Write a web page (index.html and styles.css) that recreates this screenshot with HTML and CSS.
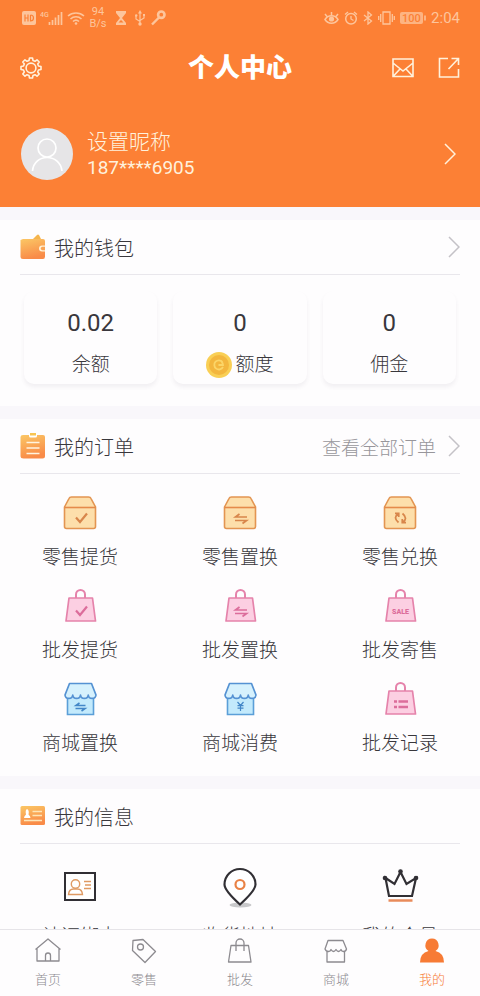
FILE: index.html
```html
<!DOCTYPE html>
<html lang="zh-CN">
<head>
<meta charset="utf-8">
<meta name="viewport" content="width=device-width, initial-scale=1">
<title>个人中心</title>
<link rel="stylesheet" href="styles.css">
</head>
<body>
<svg class="defs" aria-hidden="true">
  <defs>
    <linearGradient id="gold" x1="0" y1="0" x2="0.3" y2="1"><stop offset="0" stop-color="#fbc765"/><stop offset="1" stop-color="#f98b48"/></linearGradient>
    <symbol id="box" viewBox="0 0 36 36">
      <path d="M2.5 12 L7 3.5 Q7.600 2 9.500 2 H26.500 Q28.400 2 29 3.500 L33.500 12 V31.500 Q33.500 33.500 31.500 33.500 H4.500 Q2.500 33.500 2.500 31.500Z" fill="#fddfab" stroke="#e39552" stroke-width="1.600"/>
      <path d="M2.500 12.500H33.500" stroke="#e58a4a" stroke-width="1.600"/>
    </symbol>
    <symbol id="bag" viewBox="0 0 36 36">
      <path d="M14 10V6.500a4.500 4.500 0 0 1 9 0V10" fill="none" stroke="#e583ab" stroke-width="2"/>
      <path d="M7 10H30.500L33.500 33H4Z" fill="#fccfe2" stroke="#e583ab" stroke-width="1.700" stroke-linejoin="round"/>
    </symbol>
    <symbol id="shop" viewBox="0 0 36 36">
      <path d="M5.500 15H31.500V33.500H5.500Z" fill="#c3eafc" stroke="#5b9fd8" stroke-width="1.600"/>
      <path d="M7.500 2.500H29.500L34 14a3.900 3.900 0 0 1-7.750 0 3.900 3.900 0 0 1-7.750 0 3.900 3.900 0 0 1-7.750 0A3.900 3.900 0 0 1 3 14Z" fill="#d6f1fd" stroke="#5592d3" stroke-width="1.700" stroke-linejoin="round"/>
    </symbol>
    <symbol id="check" viewBox="0 0 36 36"><path d="M14 22.500l4 4.500 7-8.500" fill="none" stroke="currentColor" stroke-width="2.200"/></symbol>
    <symbol id="swap" viewBox="0 0 36 36"><path d="M25 22H13.500l4-3M13 25.500H24.500l-4 3" fill="none" stroke="currentColor" stroke-width="1.700"/></symbol>
    <symbol id="swap-small" viewBox="0 0 36 36"><path d="M23.500 24.500H14l3.500-2.500M13.500 27.500H23l-3.500 2.500" fill="none" stroke="currentColor" stroke-width="1.600"/></symbol>
    <symbol id="chevron" viewBox="0 0 12 24"><path d="M1 2l10 10L1 22" fill="none" stroke="currentColor" stroke-width="1.500"/></symbol>
  </defs>
</svg>

<main class="page">
  <header class="hero">
    <div class="status">
      <div class="status-group">
        <svg width="14" height="14" viewBox="0 0 14 14"><rect width="14" height="14" rx="2" fill="currentColor"/><path d="M3 3.500v7M6 3.500v7M3 7h3M8.500 4v6c4 0 4-6 0-6" fill="none" stroke="#fc8035" stroke-width="1.200"/></svg>
        <svg width="23" height="16" viewBox="0 0 23 16"><text x="0" y="7" class="tiny">4G</text><path d="M9.500 12v3M12.500 10v5M15.500 7.500V15M18.500 5v10M21.500 2v13" stroke="currentColor" stroke-width="1.700"/></svg>
        <svg width="18" height="14" viewBox="0 0 18 14"><path d="M1 5a12 12 0 0 1 16 0M3.500 8a8 8 0 0 1 11 0M6 10.500a4.500 4.500 0 0 1 6 0" fill="none" stroke="currentColor" stroke-width="1.600"/><circle cx="9" cy="12.500" r="1.300" fill="currentColor"/></svg>
        <span class="speed">94<br>B/s</span>
        <svg class="glass" width="12" height="14" viewBox="0 0 12 14"><path d="M1 0h10v2l-4 5 4 5v2H1v-2l4-5-4-5z" fill="currentColor"/><path d="M3.500 11.500L6 9l2.500 2.500" fill="#fc8035"/></svg>
        <svg width="10" height="16" viewBox="0 0 10 16"><path d="M5 2v11M1 6v3l4 2.500M9 5v3L5 10.500" fill="none" stroke="currentColor" stroke-width="1.200"/><path d="M3 3.500L5 0l2 3.500z" fill="currentColor"/><circle cx="5" cy="14" r="1.700" fill="currentColor"/><circle cx="1.200" cy="5.500" r="1.200" fill="currentColor"/><path d="M8 4h2v2H8z" fill="currentColor"/></svg>
        <svg class="key" width="15" height="16" viewBox="0 0 15 16"><circle cx="10.300" cy="4.700" r="3.200" fill="none" stroke="currentColor" stroke-width="2.600"/><path d="M8 7.500L1 14.500" stroke="currentColor" stroke-width="2.400"/></svg>
      </div>
      <div class="status-group right">
        <svg width="15" height="14" viewBox="0 0 15 14"><path d="M1 8.500c3-5 10-5 13 0-3 5-10 5-13 0zM1 3l2 2.500M7.500 1v3M14 3l-2 2.500" fill="none" stroke="currentColor" stroke-width="1.500"/><circle cx="7.500" cy="8" r="2.600" fill="currentColor"/></svg>
        <svg width="14" height="14" viewBox="0 0 14 14"><circle cx="7" cy="7.700" r="5.300" fill="none" stroke="currentColor" stroke-width="1.500"/><path d="M1 3.500L4 1M13 3.500L10 1M7 5v3l2.500 1.500" fill="none" stroke="currentColor" stroke-width="1.300"/></svg>
        <svg width="10" height="14" viewBox="0 0 10 14"><path d="M1 4l7.500 6L5 13V1l3.500 3L1 10" fill="none" stroke="currentColor" stroke-width="1.300"/></svg>
        <svg width="17" height="14" viewBox="0 0 17 14"><path d="M5 1h7v12H5zM2.700 3v8M.7 5v4M14.300 3v8M16.300 5v4" fill="none" stroke="currentColor" stroke-width="1.300"/></svg>
        <svg width="26" height="12" viewBox="0 0 26 12"><rect width="23" height="12" rx="2" fill="currentColor" opacity=".75"/><path d="M25 3.500v5" stroke="currentColor" stroke-width="1.500"/><text x="2" y="10" class="charge">100</text></svg>
        <span class="clock">2:04</span>
      </div>
    </div>
    <div class="nav">
      <button class="icon-btn" aria-label="设置">
        <svg width="22" height="22" viewBox="0 0 22 22"><path d="M9 3.500L9.500 1h3L13 3.500l2 .8L17 2.800 19.200 5l-1.500 2 .8 2 2.500.5v3l-2.500.5-.8 2 1.500 2-2.200 2.200-2-1.500-2 .8-.5 2.500h-3L9 18.500l-2-.8-2 1.500L2.800 17l1.500-2-.8-2L1 12.500v-3L3.500 9l.8-2-1.500-2L5 2.800l2 1.500z" fill="none" stroke="currentColor" stroke-width="1.600" stroke-linejoin="round"/><circle cx="11" cy="11" r="4.900" fill="none" stroke="currentColor" stroke-width="1.600"/></svg>
      </button>
      <h1>个人中心</h1>
      <div class="nav-actions">
        <button class="icon-btn" aria-label="消息"><svg width="22" height="20" viewBox="0 0 22 20"><path d="M1 1h20v17.500H1zM1 5l10 8 10-8M1 18.500l7-7.500M21 18.500L14 11" fill="none" stroke="currentColor" stroke-width="1.600"/></svg></button>
        <button class="icon-btn" aria-label="分享"><svg width="22" height="22" viewBox="0 0 22 22"><path d="M10 1.500H1.500v18.500h19V12M13.500 1.500h7V8M20.500 1.500L10.500 12" fill="none" stroke="currentColor" stroke-width="1.600"/></svg></button>
      </div>
    </div>
    <a class="profile" href="#profile">
      <svg width="52" height="52" viewBox="0 0 52 52"><circle cx="26" cy="26" r="26" fill="#e6e5e7"/><circle cx="26" cy="20" r="9" fill="none" stroke="#fff" stroke-width="1.700"/><path d="M11.500 43C13 25 39 25 41 43" fill="none" stroke="#fff" stroke-width="1.700"/></svg>
      <span class="who"><span class="nick">设置昵称</span><span class="phone">187****6905</span></span>
      <svg class="chevron" width="12" height="24"><use href="#chevron"/></svg>
    </a>
  </header>

  <section class="panel">
    <a class="panel-head" href="#wallet">
      <svg width="26" height="26" viewBox="0 0 26 26"><path d="M13 5l4-4q1-.8 2 0l2 4z" fill="#f5b54d"/><path d="M3 5h20q2 0 2 2v15.500q0 2.500-2 2.500H3q-2.500 0-2.500-2.500V6z" fill="url(#gold)"/><path d="M25 11.500h-3a3 3 0 0 0 0 6h3z" fill="#fff0d5"/><path d="M25 12.800h-2.500a1.700 1.700 0 0 0 0 3.400H25z" fill="#f9a456"/></svg>
      <h2>我的钱包</h2>
      <svg class="chevron" width="12" height="24"><use href="#chevron"/></svg>
    </a>
    <div class="cards">
      <a class="card" href="#balance"><span class="amount">0.02</span><span class="caption">余额</span></a>
      <a class="card" href="#quota"><span class="amount">0</span><span class="caption"><svg width="26" height="26" viewBox="0 0 26 26"><circle cx="13" cy="13" r="13" fill="#f9cf55"/><circle cx="13" cy="13" r="10" fill="#f3b63e"/><path d="M16.500 10a4.600 4.600 0 1 0 .5 5M12.500 13h4.500q0-2-1.500-3" fill="none" stroke="#fbd568" stroke-width="1.800"/></svg>额度</span></a>
      <a class="card" href="#commission"><span class="amount">0</span><span class="caption">佣金</span></a>
    </div>
  </section>

  <section class="panel">
    <a class="panel-head" href="#orders">
      <svg width="26" height="26" viewBox="0 0 26 26"><path d="M3 2h20q2 0 2 2v19q0 2.500-2.500 2.500h-19Q.5 25.500.5 23V4q0-2 2.500-2z" fill="url(#gold)"/><path d="M9 0h8v3q0 1.500-1.500 1.500h-5Q9 4.500 9 3z" fill="#fff"/><path d="M10 0h6v2.500h-6z" fill="#f8c451"/><path d="M6.500 9.500h13M6.500 15h13M6.500 20.500h13" stroke="#fff4df" stroke-width="1.700"/></svg>
      <h2>我的订单</h2>
      <span class="more">查看全部订单</span>
      <svg class="chevron" width="12" height="24"><use href="#chevron"/></svg>
    </a>
    <div class="grid">
      <a class="tile" href="#o1"><svg class="amber"><use href="#box"/><use href="#check"/></svg>零售提货</a>
      <a class="tile" href="#o2"><svg class="amber"><use href="#box"/><use href="#swap"/></svg>零售置换</a>
      <a class="tile" href="#o3"><svg class="amber" viewBox="0 0 36 36"><use href="#box"/><path d="M16.500 18.500q-6 4 0 9M13 18.300h3.700v3.700M20.500 27.500q6-4 0-9M24 27.700h-3.700v-3.700" fill="none" stroke="currentColor" stroke-width="1.800"/></svg>零售兑换</a>
      <a class="tile" href="#o4"><svg class="pink"><use href="#bag"/><use href="#check"/></svg>批发提货</a>
      <a class="tile" href="#o5"><svg class="pink"><use href="#bag"/><use href="#swap"/></svg>批发置换</a>
      <a class="tile" href="#o6"><svg class="pink" viewBox="0 0 36 36"><use href="#bag"/><text x="18.500" y="26" text-anchor="middle" class="sale">SALE</text></svg>批发寄售</a>
      <a class="tile" href="#o7"><svg class="blue"><use href="#shop"/><use href="#swap-small"/></svg>商城置换</a>
      <a class="tile" href="#o8"><svg class="blue" viewBox="0 0 36 36"><use href="#shop"/><path d="M15.500 21l3 3.500 3-3.500M18.500 24.500v5.500M15.500 24.700h6M15.500 27.200h6" fill="none" stroke="currentColor" stroke-width="1.200"/></svg>商城消费</a>
      <a class="tile" href="#o9"><svg class="pink" viewBox="0 0 36 36"><use href="#bag"/><path d="M12 20.500h3M16.500 20.500h9.500M12 26h3M16.500 26h9.500" stroke="currentColor" stroke-width="2.400"/></svg>批发记录</a>
    </div>
  </section>

  <section class="panel">
    <div class="panel-head">
      <svg width="26" height="26" viewBox="0 0 26 26"><rect x=".5" y="3" width="24.500" height="19" rx="1.500" fill="url(#gold)"/><path d="M4 15q0-2 2-3.500-1-4.500 1-5.500 2.500 1 1.500 5.500 2 1.500 2 3.500z" fill="#fff"/><path d="M12.500 8.500H22M12.500 12.500H22M4 17.500h18" stroke="#fde5b9" stroke-width="1.500"/></svg>
      <h2>我的信息</h2>
    </div>
    <div class="grid info">
      <a class="tile" href="#i1"><svg viewBox="0 0 36 36"><rect x="3" y="4" width="30" height="27" fill="#fff" stroke="#312f34" stroke-width="2"/><g fill="none" stroke="#df9a63" stroke-width="1.400"><circle cx="13.500" cy="15" r="4.200"/><path d="M6.500 25.500q.5-5.500 5-5.500h4q4.500 0 5 5.500zM22 12.500h7M23 16h6M22 19.500h7"/></g></svg>认证绑卡</a>
      <a class="tile" href="#i2"><svg viewBox="0 0 36 36"><ellipse cx="18.500" cy="36" rx="11" ry="2.500" fill="#c9c9cb"/><path d="M18 35.500Q2.500 21.500 2.500 15.500a15.500 15.500 0 0 1 31 0Q33.500 21.500 18 35.500z" fill="#fff" stroke="#312f34" stroke-width="2.200"/><circle cx="18" cy="15.500" r="4.500" fill="none" stroke="#e98245" stroke-width="2.200"/></svg>收货地址</a>
      <a class="tile" href="#i3"><svg viewBox="0 0 36 36"><path d="M3.500 9L7 27h23l4-18-9.500 6-6-12-6 12z" fill="none" stroke="#312f34" stroke-width="2.200"/><g fill="#312f34"><circle cx="3" cy="9" r="2.300"/><circle cx="18.500" cy="2.500" r="2.300"/><circle cx="34" cy="9" r="2.300"/></g><path d="M6.500 31.500h24" stroke="#e98b5b" stroke-width="2.500"/></svg>我的会员</a>
    </div>
  </section>
</main>

<nav class="tabs">
  <a href="#home"><svg viewBox="0 0 28 28"><path d="M1.500 12.500L14 2l12.500 10.500M3 11v13h22V11M11.500 24v-5.500a2.500 2.500 0 0 1 5 0V24"/></svg>首页</a>
  <a href="#retail"><svg viewBox="0 0 28 28"><path d="M3 3.500L13 2.500 25.500 14.500 15 25.500 2.500 13.500z"/><circle cx="10.500" cy="10" r="3"/></svg>零售</a>
  <a href="#bulk"><svg viewBox="0 0 28 28"><path d="M5 8.500H22.500L25 25H2.500zM10 14V6a4 4 0 0 1 8 0v8"/></svg>批发</a>
  <a href="#mall"><svg viewBox="0 0 28 28"><path d="M6 3.500h15L24.500 12q-.5 2.500-3 2.500-2 0-2.500-2-2.500 4-5 0-2.500 4-5 0-.5 2-2.500 2-2.500 0-3.500-2.500zM5 14.500V25h17.500V14.500"/></svg>商城</a>
  <a class="current" href="#me"><svg viewBox="0 0 28 28"><path d="M14 1.500a6.800 6.800 0 0 1 3.500 12.500Q26 16 26 25.500H2Q2 16 10.500 14A6.800 6.800 0 0 1 14 1.500z"/></svg>我的</a>
</nav>
</body>
</html>
```

FILE: styles.css
```css
* {
  box-sizing: border-box;
}

body {
  display: flex;
  flex-direction: column;
  height: 100vh;
  margin: 0;
  background: #f9f7fb;
  color: #39373c;
  font-family: Roboto, "Noto Sans CJK SC", sans-serif;
  font-weight: 300;
}

a {
  color: inherit;
  text-decoration: none;
}

h1,
h2 {
  margin: 0;
}

svg {
  flex: none;
}

.defs {
  position: absolute;
  width: 0;
  height: 0;
}

.page {
  flex: 1;
  min-height: 0;
  overflow-y: auto;
  scrollbar-width: none;
}

/* Header */
.hero {
  background: #fc8035;
  color: #fff1dc;
}

.status {
  display: flex;
  align-items: center;
  justify-content: space-between;
  height: 36px;
  padding: 0 20px 0 22px;
  color: #fdc59c;
}

.status-group {
  display: flex;
  align-items: center;
  gap: 4px;
}

.status-group.right {
  gap: 5px;
}

.tiny {
  fill: currentColor;
  font-size: 7px;
  font-weight: 500;
}

.charge {
  fill: #fc8035;
  font-size: 11px;
  font-weight: 500;
}

.speed {
  width: 18px;
  font-size: 11px;
  font-weight: 400;
  line-height: 12px;
  text-align: center;
}

.glass {
  margin: 0 4px;
}

.key {
  margin-left: 2px;
}

.clock {
  font-size: 15px;
  font-weight: 400;
}

.nav {
  display: grid;
  grid-template-columns: 1fr auto 1fr;
  align-items: center;
  height: 64px;
  padding: 0 20px;
}

.nav h1 {
  color: #fff;
  font-size: 26px;
  font-weight: 900;
  line-height: 32px;
}

.nav-actions {
  display: flex;
  align-items: center;
  justify-content: flex-end;
  gap: 24px;
}

.icon-btn {
  display: flex;
  justify-self: start;
  padding: 0;
  border: 0;
  background: none;
  color: inherit;
}

.profile {
  display: flex;
  align-items: center;
  gap: 14px;
  height: 107px;
  padding: 0 24px 0 21px;
}

.who {
  display: flex;
  flex: 1;
  flex-direction: column;
}

.nick {
  font-size: 21px;
  line-height: 28px;
}

.phone {
  font-size: 19px;
  font-weight: 400;
  line-height: 24px;
}

/* Panels */
.panel {
  margin: 13px 0;
  background: #fefdfe;
}

.panel-head {
  display: flex;
  align-items: center;
  gap: 8px;
  height: 55px;
  margin: 0 20px;
  border-bottom: 1px solid #e9e7ec;
}

.panel-head h2 {
  flex: 1;
  font-size: 20px;
  font-weight: 300;
}

.panel-head .chevron {
  margin-left: 4px;
  color: #c4c2c7;
}

.more {
  color: #98969b;
  font-size: 19px;
}

/* Wallet */
.cards {
  display: grid;
  grid-template-columns: repeat(3, 1fr);
  gap: 16px;
  padding: 16px 24px 22px;
}

.card {
  display: flex;
  flex-direction: column;
  align-items: center;
  gap: 13px;
  padding: 17px 0 5px;
  border-radius: 10px;
  background: #fefdfe;
  box-shadow: 0 3px 4px rgba(70, 60, 90, 0.07);
}

.amount {
  font-size: 24px;
  font-weight: 400;
  line-height: 30px;
}

.caption {
  display: flex;
  align-items: center;
  gap: 3px;
  font-size: 19px;
  line-height: 28px;
}

/* Shortcut grid */
.grid {
  display: grid;
  grid-template-columns: repeat(3, 1fr);
  row-gap: 16px;
  padding: 21px 0 18px;
}

.tile {
  display: flex;
  flex-direction: column;
  align-items: center;
  gap: 13px;
  font-size: 19px;
  line-height: 28px;
}

.tile svg {
  width: 36px;
  height: 36px;
  overflow: visible;
}

.info {
  padding-top: 25px;
}

.info .tile {
  gap: 18px;
}

.amber {
  color: #d8864b;
}

.pink {
  color: #dc6d9b;
}

.blue {
  color: #4387c8;
}

.sale {
  fill: currentColor;
  font-size: 7px;
  font-weight: 900;
}

/* Bottom tabs */
.tabs {
  display: grid;
  grid-template-columns: repeat(5, 1fr);
  height: 67px;
  padding-top: 7px;
  border-top: 1px solid #e6e4e8;
  background: #fefdfe;
}

.tabs a {
  display: flex;
  flex-direction: column;
  align-items: center;
  gap: 5px;
  color: #8d8b90;
  font-size: 13px;
  line-height: 20px;
}

.tabs svg {
  width: 28px;
  height: 28px;
  fill: none;
  stroke: currentColor;
  stroke-width: 1.3;
  stroke-linejoin: round;
}

.tabs .current {
  color: #f77b35;
}

.tabs .current svg {
  fill: currentColor;
  stroke: none;
}
```
